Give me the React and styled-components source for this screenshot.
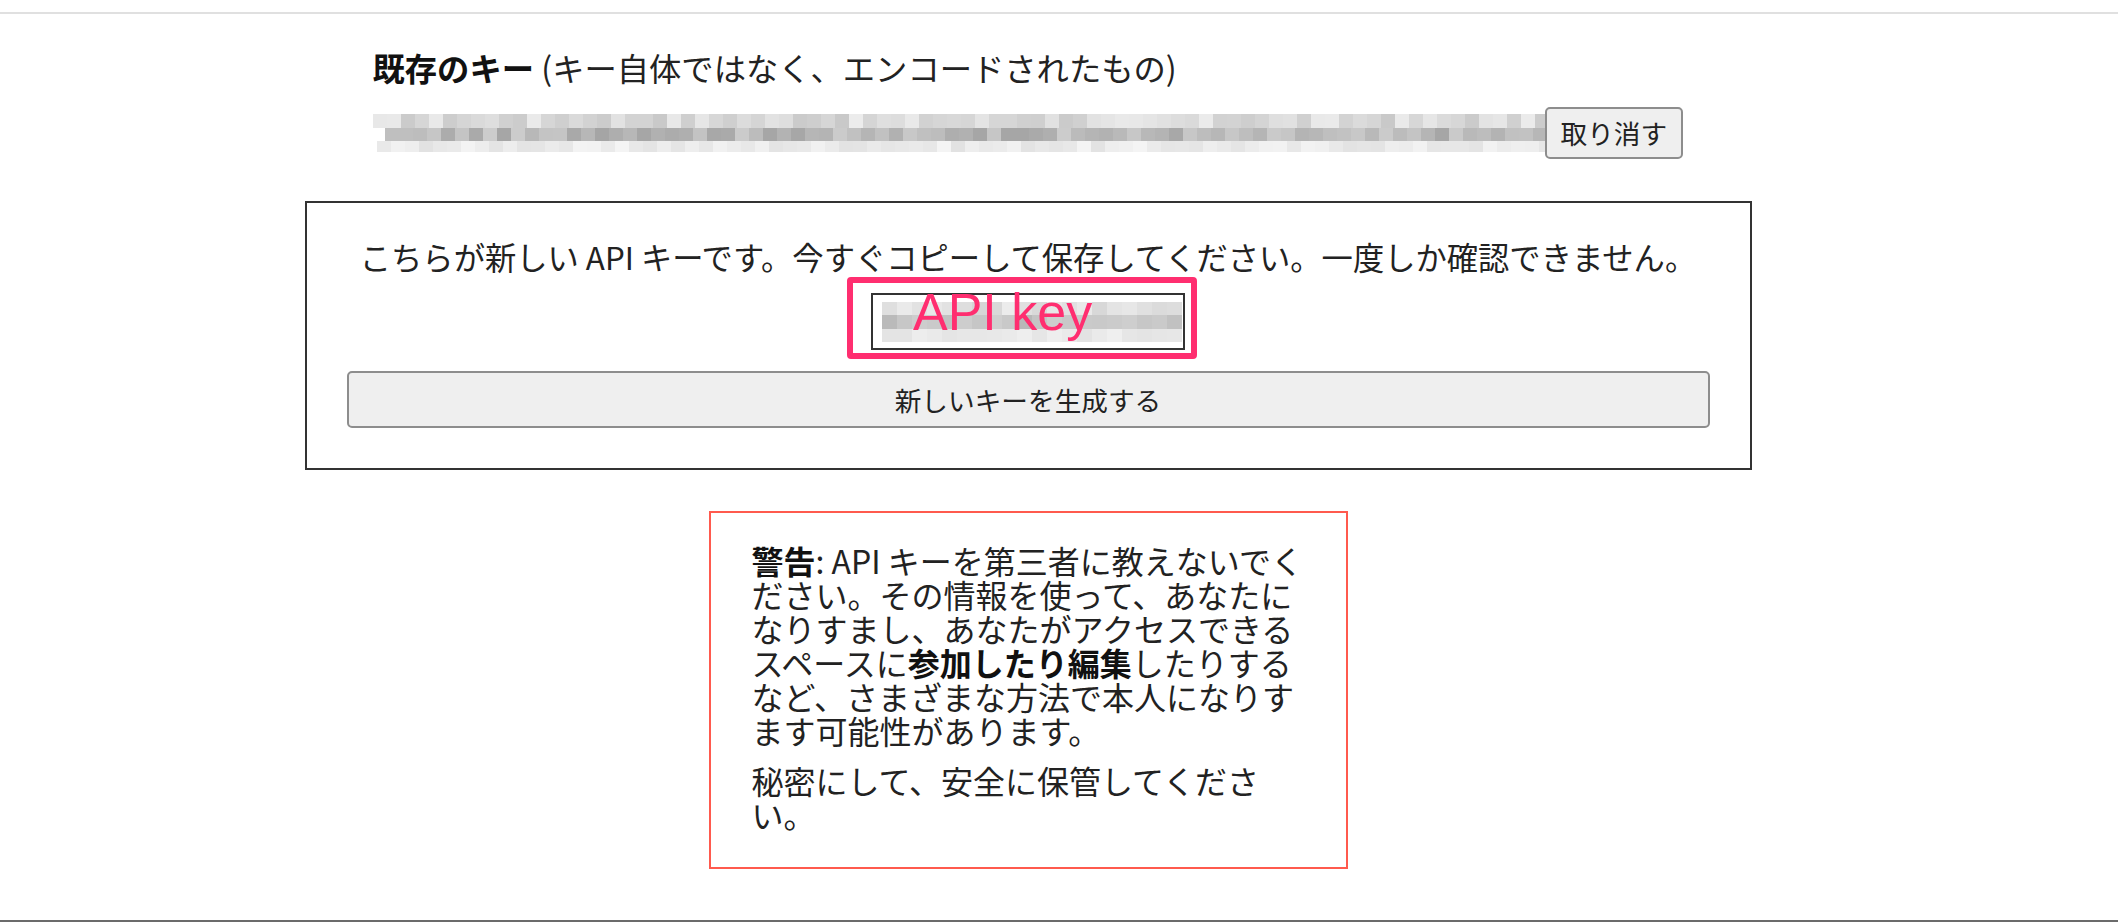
import React from 'react'
import styled, { createGlobalStyle } from 'styled-components'

const GlobalStyle = createGlobalStyle`
  html, body {
    margin: 0;
    padding: 0;
    background: #fff;
  }
  body {
    font-family: "Noto Sans CJK JP", "Noto Sans", sans-serif;
    color: #222;
  }
`

const Page = styled.div`
  min-height: 100vh;
  box-sizing: border-box;
  display: flex;
  flex-direction: column;
  border-bottom: 2px solid #6b6b6b;
`

const TopBar = styled.div`
  height: 12px;
  border-bottom: 2px solid #e0e0e0;
`

const Main = styled.main`
  display: flex;
  justify-content: center;
  padding-right: 62px;
`

const Column = styled.div`
  width: 1447px;
  display: flex;
  flex-direction: column;
  align-items: center;
`

const KeySection = styled.section`
  align-self: stretch;
  padding: 0 68px;
`

const Heading = styled.div`
  margin-top: 30px;
  font-size: 32.3px;
  line-height: 46px;
  color: #222;

  strong {
    color: #111;
    font-weight: 700;
  }
`

const KeyRow = styled.div`
  margin-top: 17px;
  display: flex;
  align-items: center;
`

const MosaicSvg = styled.svg`
  display: block;
  flex-shrink: 0;
  filter: blur(0.7px);
`

const Button = styled.button`
  box-sizing: border-box;
  font-family: "Noto Sans CJK JP", "Noto Sans", sans-serif;
  font-size: 26.67px;
  color: #222;
  background: #efefef;
  border: 2px solid #8d8d8d;
  border-radius: 5px;
  cursor: pointer;
`

const CancelButton = styled(Button)`
  height: 52px;
  padding: 0 14px;
  line-height: 46px;
`

const NewKeyBox = styled.section`
  margin-top: 42px;
  align-self: stretch;
  border: 2px solid #333;
  padding: 35px 40px 40px;
  text-align: center;
`

const Lead = styled.p`
  margin: 0;
  font-size: 31.3px;
  line-height: 38px;
  white-space: nowrap;
`

const FieldWrap = styled.div`
  position: relative;
  display: inline-block;
  margin-top: 17px;
  vertical-align: top;
`

const KeyField = styled.div`
  box-sizing: border-box;
  width: 314px;
  height: 57px;
  border: 2px solid #333;
  padding: 7px 0 0 9px;
  background: #fff;
`

const Highlight = styled.div`
  position: absolute;
  left: -24px;
  top: -16px;
  width: 350px;
  height: 82px;
  box-sizing: border-box;
  border: 6px solid #ff2e70;
  border-radius: 4px;
  pointer-events: none;
`

const Callout = styled.span`
  position: absolute;
  left: 42px;
  top: -7px;
  font-family: "Liberation Sans", Arial, sans-serif;
  font-size: 52px;
  line-height: 52px;
  color: #ff2e70;
  white-space: nowrap;
`

const GenerateButton = styled(Button)`
  display: block;
  width: 100%;
  height: 57px;
  margin-top: 21px;
  line-height: 50px;
`

const Warning = styled.aside`
  margin-top: 41px;
  width: 639px;
  box-sizing: border-box;
  border: 2px solid #ff5a4e;
  padding: 30px 37px 36px 41px;
`

const WarningText = styled.p`
  margin: ${p => (p.$spaced ? '16px 0 0' : '0')};
  max-width: ${p => p.$narrow ? '530px' : '560px'};
  font-size: 32px;
  line-height: 34px;
  color: #222;

  strong {
    font-weight: 700;
    color: #111;
  }
`

const makeRandom = seed => {
  let s = seed
  return () => {
    s = (s * 9301 + 49297) % 233280
    return s / 233280
  }
}

const Mosaic = ({ width, height, cell, rows, seed }) => {
  const rand = makeRandom(seed)
  const cells = []
  let y = 0
  rows.forEach((row, r) => {
    for (let x = row.offset || 0; x < width; x += cell) {
      const v = Math.round(row.min + rand() * (row.max - row.min))
      cells.push(
        <rect key={`${r}-${x}`} x={x} y={y} width={cell} height={row.h}
              fill={`rgb(${v},${v},${v})`} />
      )
    }
    y += row.h
  })
  return (
    <MosaicSvg width={width} height={height} viewBox={`0 0 ${width} ${height}`}
               shapeRendering="crispEdges">
      {cells}
    </MosaicSvg>
  )
}

const keyRows = [
  { h: 14, min: 200, max: 236, offset: 0 },
  { h: 13, min: 165, max: 205, offset: 12 },
  { h: 11, min: 226, max: 244, offset: 4 }
]

const fieldRows = [
  { h: 13, min: 214, max: 236 },
  { h: 14, min: 180, max: 208 },
  { h: 13, min: 226, max: 240 }
]

const App = () => {
  return (
    <>
      <GlobalStyle />
      <Page>
        <TopBar />
        <Main>
          <Column>
            <KeySection>
              <Heading>
                <strong>既存のキー</strong> (キー自体ではなく、エンコードされたもの)
              </Heading>
              <KeyRow>
                <Mosaic width={1172} height={38} cell={14} rows={keyRows} seed={17} />
                <CancelButton type='button'>取り消す</CancelButton>
              </KeyRow>
            </KeySection>

            <NewKeyBox>
              <Lead>
                こちらが新しい API キーです。今すぐコピーして保存してください。一度しか確認できません。
              </Lead>
              <FieldWrap>
                <KeyField>
                  <Mosaic width={300} height={40} cell={15} rows={fieldRows} seed={5} />
                </KeyField>
                <Highlight />
                <Callout>API key</Callout>
              </FieldWrap>
              <GenerateButton type='button'>新しいキーを生成する</GenerateButton>
            </NewKeyBox>

            <Warning>
              <WarningText>
                <strong>警告</strong>: API キーを第三者に教えないでください。その情報を使って、あなたになりすまし、あなたがアクセスできるスペースに<strong>参加したり編集</strong>したりするなど、さまざまな方法で本人になりすます可能性があります。
              </WarningText>
              <WarningText $spaced $narrow>
                秘密にして、安全に保管してください。
              </WarningText>
            </Warning>
          </Column>
        </Main>
      </Page>
    </>
  )
}

export default App
